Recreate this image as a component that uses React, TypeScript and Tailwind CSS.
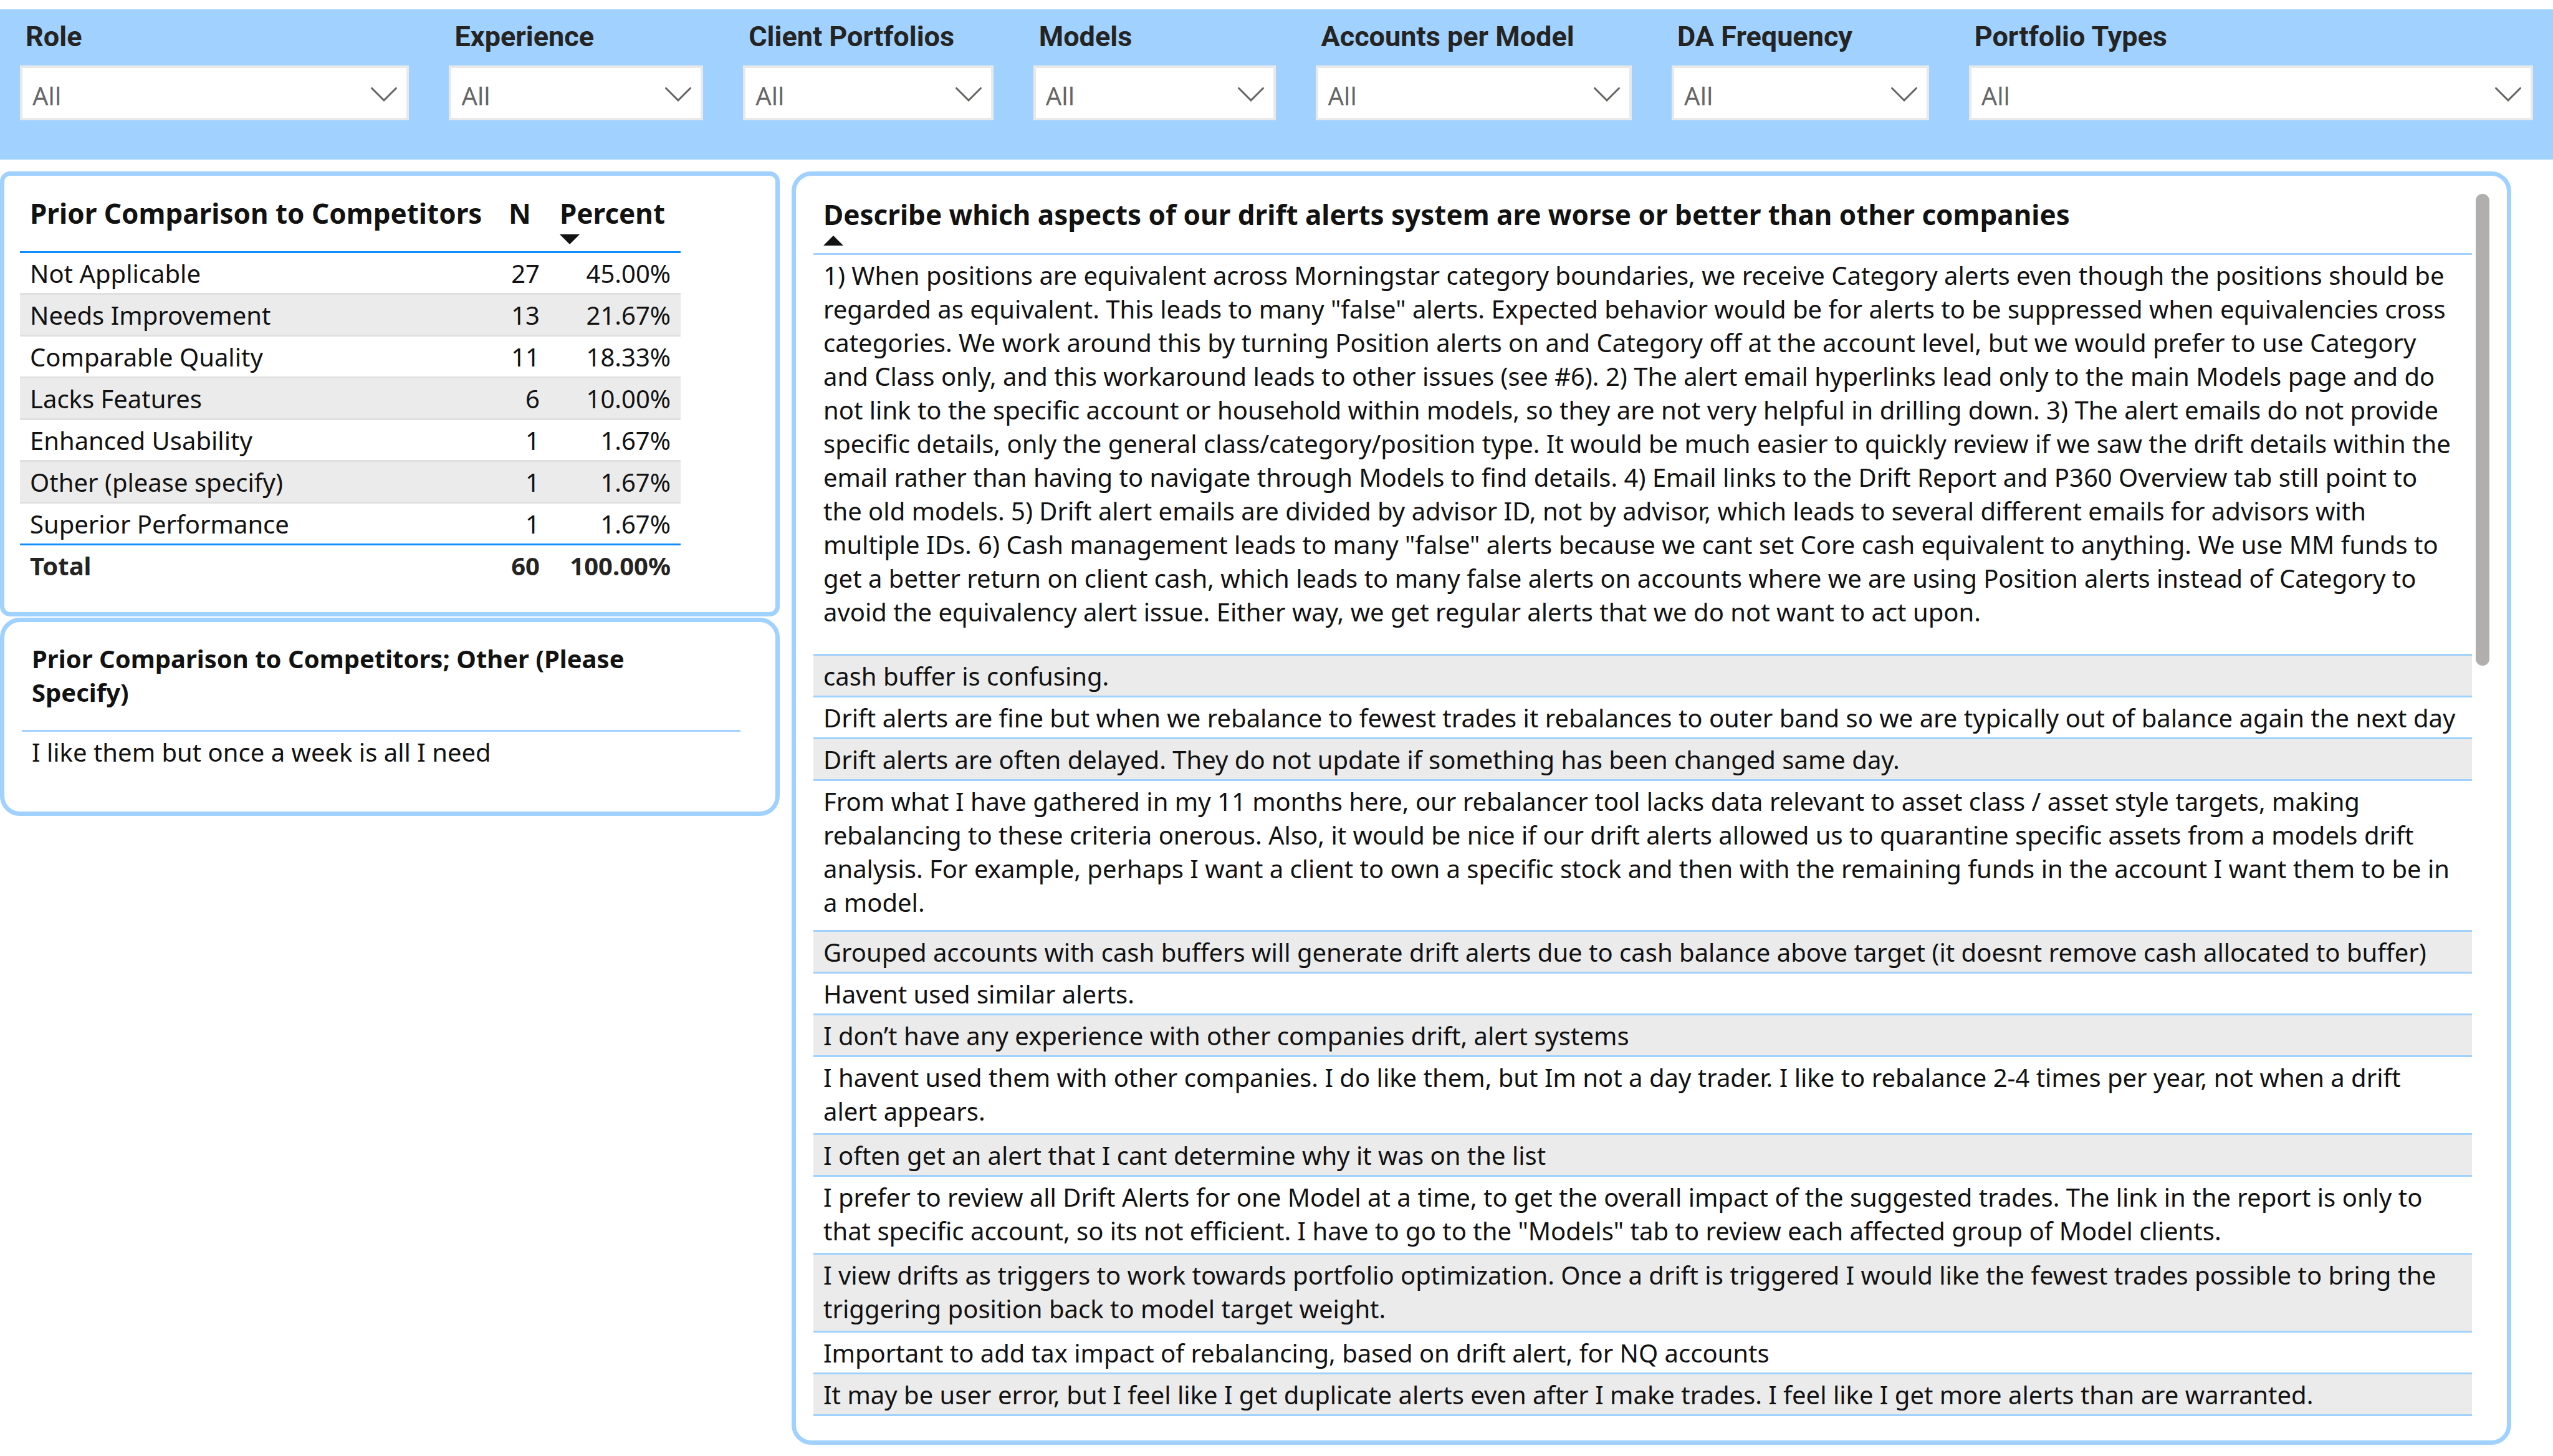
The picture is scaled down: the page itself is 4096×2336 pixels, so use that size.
import React, { useId } from "react";

const FILTERS = [
  "Role",
  "Experience",
  "Client Portfolios",
  "Models",
  "Accounts per Model",
  "DA Frequency",
  "Portfolio Types",
];

const COMPARISON: [string, string, string][] = [
  ["Not Applicable", "27", "45.00%"],
  ["Needs Improvement", "13", "21.67%"],
  ["Comparable Quality", "11", "18.33%"],
  ["Lacks Features", "6", "10.00%"],
  ["Enhanced Usability", "1", "1.67%"],
  ["Other (please specify)", "1", "1.67%"],
  ["Superior Performance", "1", "1.67%"],
];

type Comment = { lines: string[]; pad: string };

const COMMENTS: Comment[] = [
  {
    pad: "pb-10",
    lines: [
      "1) When positions are equivalent across Morningstar category boundaries, we receive Category alerts even though the positions should be",
      "regarded as equivalent. This leads to many \"false\" alerts. Expected behavior would be for alerts to be suppressed when equivalencies cross",
      "categories. We work around this by turning Position alerts on and Category off at the account level, but we would prefer to use Category",
      "and Class only, and this workaround leads to other issues (see #6). 2) The alert email hyperlinks lead only to the main Models page and do",
      "not link to the specific account or household within models, so they are not very helpful in drilling down. 3) The alert emails do not provide",
      "specific details, only the general class/category/position type. It would be much easier to quickly review if we saw the drift details within the",
      "email rather than having to navigate through Models to find details. 4) Email links to the Drift Report and P360 Overview tab still point to",
      "the old models. 5) Drift alert emails are divided by advisor ID, not by advisor, which leads to several different emails for advisors with",
      "multiple IDs. 6) Cash management leads to many \"false\" alerts because we cant set Core cash equivalent to anything. We use MM funds to",
      "get a better return on client cash, which leads to many false alerts on accounts where we are using Position alerts instead of Category to",
      "avoid the equivalency alert issue. Either way, we get regular alerts that we do not want to act upon.",
    ],
  },
  { pad: "pb-1", lines: ["cash buffer is confusing."] },
  {
    pad: "pb-1",
    lines: [
      "Drift alerts are fine but when we rebalance to fewest trades it rebalances to outer band so we are typically out of balance again the next day",
    ],
  },
  {
    pad: "pb-1",
    lines: ["Drift alerts are often delayed. They do not update if something has been changed same day."],
  },
  {
    pad: "pb-[17px]",
    lines: [
      "From what I have gathered in my 11 months here, our rebalancer tool lacks data relevant to asset class / asset style targets, making",
      "rebalancing to these criteria onerous. Also, it would be nice if our drift alerts allowed us to quarantine specific assets from a models drift",
      "analysis. For example, perhaps I want a client to own a specific stock and then with the remaining funds in the account I want them to be in",
      "a model.",
    ],
  },
  {
    pad: "pb-1",
    lines: [
      "Grouped accounts with cash buffers will generate drift alerts due to cash balance above target (it doesnt remove cash allocated to buffer)",
    ],
  },
  { pad: "pb-1", lines: ["Havent used similar alerts."] },
  { pad: "pb-1", lines: ["I don’t have any experience with other companies drift, alert systems"] },
  {
    pad: "pb-2",
    lines: [
      "I havent used them with other companies. I do like them, but Im not a day trader. I like to rebalance 2-4 times per year, not when a drift",
      "alert appears.",
    ],
  },
  { pad: "pb-1", lines: ["I often get an alert that I cant determine why it was on the list"] },
  {
    pad: "pb-2",
    lines: [
      "I prefer to review all Drift Alerts for one Model at a time, to get the overall impact of the suggested trades. The link in the report is only to",
      "that specific account, so its not efficient. I have to go to the \"Models\" tab to review each affected group of Model clients.",
    ],
  },
  {
    pad: "pb-2",
    lines: [
      "I view drifts as triggers to work towards portfolio optimization. Once a drift is triggered I would like the fewest trades possible to bring the",
      "triggering position back to model target weight.",
    ],
  },
  {
    pad: "pb-1",
    lines: ["Important to add tax impact of rebalancing, based on drift alert, for NQ accounts"],
  },
  {
    pad: "pb-1",
    lines: [
      "It may be user error, but I feel like I get duplicate alerts even after I make trades. I feel like I get more alerts than are warranted.",
    ],
  },
];

function Filter({ label }: { label: string }) {
  const id = useId();
  return (
    <div className="flex min-w-0 flex-col gap-[19px]">
      <label
        htmlFor={id}
        className="whitespace-nowrap pl-[9px] font-['Roboto',sans-serif] text-[45px] leading-[54px] font-bold text-[#252423]"
      >
        {label}
      </label>
      <div className="relative">
        <select
          id={id}
          className="block h-[88px] w-full appearance-none rounded-none border-4 border-[#e9e9e9] bg-white pt-[10px] pl-4 text-[40px] leading-[54px] text-[#666666]"
        >
          <option>All</option>
        </select>
        <svg
          viewBox="0 0 44 24"
          className="pointer-events-none absolute top-[34px] right-[18px] h-6 w-11"
          fill="none"
          stroke="#666460"
          strokeWidth="3"
          strokeLinecap="round"
          aria-hidden="true"
        >
          <path d="M2.5 2.5 L22 22 L41.5 2.5" />
        </svg>
      </div>
    </div>
  );
}

function SortMark({ up }: { up?: boolean }) {
  return (
    <svg viewBox="0 0 32 16" className="mt-1 h-4 w-8" fill="#121212" aria-hidden="true">
      <path d={up ? "M0 16 L16 0 L32 16 Z" : "M0 0 L16 16 L32 0 Z"} />
    </svg>
  );
}

function ComparisonTable() {
  return (
    <section className="rounded-2xl border-[7px] border-[#a0d1ff] pt-[30px] pr-[152px] pb-[43px] pl-[25px]">
      <table className="w-full table-fixed border-separate border-spacing-0 text-[40px] leading-[54px]">
        <colgroup>
          <col />
          <col className="w-[82px]" />
          <col className="w-[210px]" />
        </colgroup>
        <thead>
          <tr className="text-left align-top text-[44px] leading-[60px] whitespace-nowrap">
            <th scope="col" className="border-b-[3px] border-[#118dff] px-4 pb-[11px] align-top font-bold">
              Prior Comparison to Competitors
            </th>
            <th scope="col" className="border-b-[3px] border-[#118dff] pb-[11px] pl-4 align-top font-bold">
              N
            </th>
            <th scope="col" className="border-b-[3px] border-[#118dff] pb-[11px] pl-4 align-top font-bold">
              Percent
              <SortMark />
            </th>
          </tr>
        </thead>
        <tbody>
          {COMPARISON.map(([name, n, percent], i) => {
            const last = i === COMPARISON.length - 1;
            const cell = `border-b-[3px] px-4 pt-[6px] pb-1 ${last ? "border-[#118dff]" : "border-[#e0e0e0]"}`;
            return (
              <tr key={name} className={i % 2 ? "bg-[#ebebeb]" : "bg-white"}>
                <td className={cell}>{name}</td>
                <td className={`${cell} text-right`}>{n}</td>
                <td className={`${cell} text-right`}>{percent}</td>
              </tr>
            );
          })}
        </tbody>
        <tfoot>
          <tr className="font-bold text-[#252423]">
            <th scope="row" className="px-4 pt-[6px] pb-1 text-left">
              Total
            </th>
            <td className="px-4 pt-[6px] pb-1 text-right">60</td>
            <td className="px-4 pt-[6px] pb-1 text-right">100.00%</td>
          </tr>
        </tfoot>
      </table>
    </section>
  );
}

function OtherTable() {
  return (
    <section className="rounded-4xl border-[7px] border-[#a0d1ff] pt-8 pr-14 pb-16 pl-7">
      <table className="w-full border-separate border-spacing-0 text-left text-[40px] leading-[54px]">
        <thead>
          <tr>
            <th scope="col" className="border-b-[3px] border-[#a0d1ff] px-4 pb-[33px] font-bold">
              Prior Comparison to Competitors; Other (Please
              <br />
              Specify)
            </th>
          </tr>
        </thead>
        <tbody>
          <tr>
            <td className="px-4 pt-[6px] pb-1">I like them but once a week is all I need</td>
          </tr>
        </tbody>
      </table>
    </section>
  );
}

function CommentsTable() {
  return (
    <section className="flex items-start gap-[6px] rounded-4xl border-[7px] border-[#a0d1ff] px-7 pt-8 pb-[39px]">
      <table className="min-w-0 flex-1 table-fixed border-separate border-spacing-0 text-left text-[40px] leading-[54px]">
        <thead>
          <tr>
            <th
              scope="col"
              className="border-b-[3px] border-[#a0d1ff] px-4 pb-3 text-[44px] leading-[60px] font-bold"
            >
              Describe which aspects of our drift alerts system are worse or better than other companies
              <SortMark up />
            </th>
          </tr>
        </thead>
        <tbody>
          {COMMENTS.map(({ lines, pad }, i) => (
            <tr key={i} className={i % 2 ? "bg-[#ebebeb]" : "bg-white"}>
              <td className={`border-b-[3px] border-[#a0d1ff] pt-[6px] pl-4 whitespace-pre-line ${pad}`}>
                {lines.join("\n")}
              </td>
            </tr>
          ))}
        </tbody>
      </table>
      <div className="-mt-[3px] h-[757px] w-[22px] shrink-0 rounded-full bg-[#b0afad]" />
    </section>
  );
}

export default function App() {
  return (
    <div className="min-h-screen bg-white pt-[15px] font-['Noto_Sans',sans-serif] text-[#121212]">
      <header className="grid grid-cols-[625fr_408fr_402fr_389fr_508fr_413fr_906fr] gap-16 bg-[#a0d1ff] px-8 pt-[17px] pb-[63px]">
        {FILTERS.map((f) => (
          <Filter key={f} label={f} />
        ))}
      </header>
      <main className="grid grid-cols-[1251fr_2759fr] items-start gap-[19px] pt-[19px] pr-[67px]">
        <div className="flex min-w-0 flex-col gap-[2px]">
          <ComparisonTable />
          <OtherTable />
        </div>
        <CommentsTable />
      </main>
    </div>
  );
}
